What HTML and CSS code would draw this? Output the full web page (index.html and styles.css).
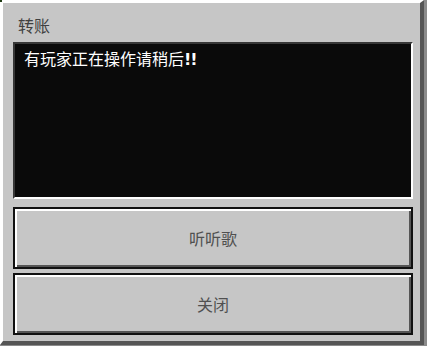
FILE: index.html
```html
<!DOCTYPE html>
<html lang="zh">
<head>
<meta charset="utf-8">
<link rel="stylesheet" href="styles.css">
</head>
<body>
<div class="frame">
  <div class="panel">
    <div class="title">转账</div>
    <div class="screen">有玩家正在操作请稍后<b class="bang">!!</b></div>
    <div class="btn">听听歌</div>
    <div class="btn">关闭</div>
  </div>
</div>
</body>
</html>
```
FILE: styles.css
```css
html, body {
  margin: 0;
  padding: 0;
  background: #8b8b8b;
}
body {
  font-family: "Noto Sans CJK SC", "Noto Sans", sans-serif;
}
.frame {
  position: relative;
  width: 427px;
  height: 346px;
  box-sizing: border-box;
  padding: 0 3px 1px 0;
  background: #8b8b8b;
}
.frame::before {
  content: "";
  position: absolute;
  left: 0;
  top: 0;
  width: 2px;
  height: 2px;
  background: #1e3a12;
}
.panel {
  height: 100%;
  box-sizing: border-box;
  background: #c6c6c6;
  border-top: 3px solid #ffffff;
  border-left: 3px solid #ffffff;
  border-right: 4px solid #555555;
  border-bottom: 4px solid #555555;
  padding: 0 7px 6px 10px;
  display: flex;
  flex-direction: column;
}
.title {
  font-size: 16px;
  line-height: 18px;
  color: #404040;
  margin: 13px 0 8px 5px;
}
.screen {
  height: 157px;
  box-sizing: border-box;
  background: #0a0a0a;
  border-top: 2px solid #373737;
  border-left: 2px solid #373737;
  border-right: 2px solid #ffffff;
  border-bottom: 2px solid #ffffff;
  color: #ffffff;
  font-size: 16px;
  line-height: 18px;
  padding: 5px 0 0 9px;
  margin-bottom: 8px;
}
.bang {
  font-family: "DejaVu Sans", sans-serif;
  font-weight: bold;
  letter-spacing: -1px;
}
.btn {
  height: 62px;
  box-sizing: border-box;
  border: 2px solid #111111;
  box-shadow: inset 2px 2px 0 #ffffff, inset -2px -2px 0 #555555;
  background: #c6c6c6;
  color: #505050;
  font-size: 16px;
  display: flex;
  align-items: center;
  justify-content: center;
  margin-bottom: 4px;
}
.btn:last-child {
  margin-bottom: 0;
}
```
